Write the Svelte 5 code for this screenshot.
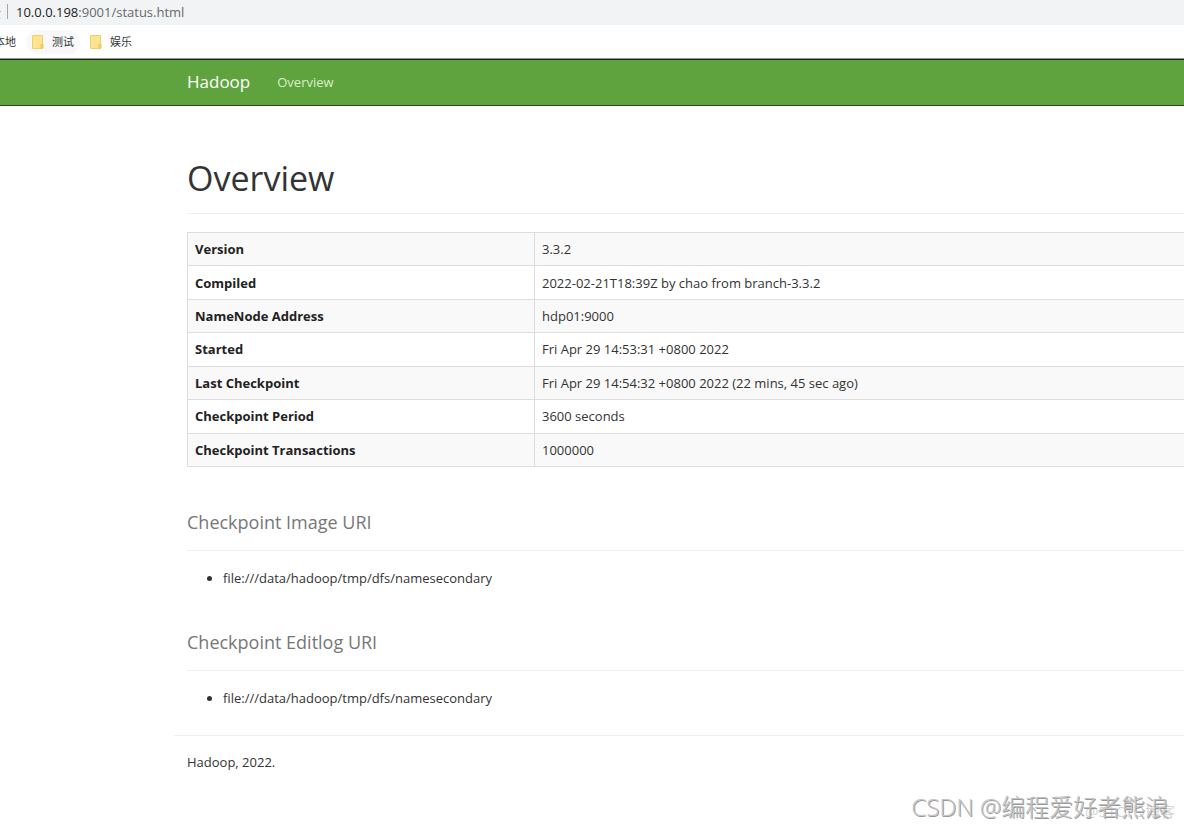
<script lang="ts">
  interface InfoRow {
    label: string;
    value: string;
  }

  const bookmarks = ["本地", "测试", "娱乐"];

  const rows: InfoRow[] = [
    { label: "Version", value: "3.3.2" },
    { label: "Compiled", value: "2022-02-21T18:39Z by chao from branch-3.3.2" },
    { label: "NameNode Address", value: "hdp01:9000" },
    { label: "Started", value: "Fri Apr 29 14:53:31 +0800 2022" },
    { label: "Last Checkpoint", value: "Fri Apr 29 14:54:32 +0800 2022 (22 mins, 45 sec ago)" },
    { label: "Checkpoint Period", value: "3600 seconds" },
    { label: "Checkpoint Transactions", value: "1000000" },
  ];

  const sections = [
    { title: "Checkpoint Image URI", uris: ["file:///data/hadoop/tmp/dfs/namesecondary"] },
    { title: "Checkpoint Editlog URI", uris: ["file:///data/hadoop/tmp/dfs/namesecondary"] },
  ];
</script>

<div class="address-bar">
  <span class="clipped">全</span>
  <span class="divider"></span>
  <span class="url"><span class="host">10.0.0.198</span>:9001/status.html</span>
</div>

<div class="bookmarks">
  {#each bookmarks as name, i}
    <a class="bookmark" class:first={i === 0} class:hovered={i === 1} href="#{name}">
      {#if i > 0}
        <svg width="12" height="14" viewBox="0 0 12 14" aria-hidden="true">
          <path d="M1 .5H10.5V13.5H1Q.5 13.5 .5 13V1Q.5 .5 1 .5Z" fill="#ffe391" stroke="#efcf68" />
          <path d="M9 9.5H11V13H9Z" fill="#ffdc6d" stroke="#eac34d" />
        </svg>
      {/if}
      <span>{name}</span>
    </a>
  {/each}
</div>

<header class="navbar">
  <a class="brand" href="#home">Hadoop</a>
  <a class="nav-link" href="#overview">Overview</a>
</header>

<main class="container">
  <h1>Overview</h1>

  <table>
    <tbody>
      {#each rows as row}
        <tr>
          <th scope="row">{row.label}</th>
          <td>{row.value}</td>
        </tr>
      {/each}
    </tbody>
  </table>

  {#each sections as section}
    <section>
      <h2>{section.title}</h2>
      <ul>
        {#each section.uris as uri}
          <li>{uri}</li>
        {/each}
      </ul>
    </section>
  {/each}
</main>

<footer>
  <p>Hadoop, 2022.</p>
</footer>

<div class="watermark host-mark">@51CTO博客</div>
<div class="watermark author-mark">CSDN @编程爱好者熊浪</div>

<style>
  :global(body) {
    background: #fff;
    color: #333;
    font-family: "Open Sans", "Noto Sans CJK SC", sans-serif;
    font-size: 13px;
    line-height: 18px;
    overflow: hidden;
  }

  .address-bar {
    display: flex;
    align-items: center;
    height: 23px;
    padding-bottom: 2px;
    background: #f1f3f4;
    color: #666a6e;
  }

  .clipped {
    display: flex;
    justify-content: flex-end;
    width: 1px;
    overflow: hidden;
  }

  .divider {
    width: 1px;
    height: 15px;
    margin: 0 8px 0 6px;
    background: #a5a8ab;
  }

  .host {
    color: #202124;
  }

  .bookmarks {
    display: flex;
    align-items: center;
    height: 33px;
    border-bottom: 1px solid #999;
    font-size: 11px;
  }

  .bookmark {
    display: flex;
    align-items: center;
    gap: 8px;
    padding: 3px 6px;
    border-radius: 12px;
    color: #333;
    text-decoration: none;
  }

  .bookmark.first {
    margin: 0 4px 0 -12px;
  }

  .bookmark.hovered {
    background: #f8f8f9;
    margin-right: 4px;
  }

  .navbar {
    display: flex;
    align-items: center;
    gap: 27px;
    height: 43px;
    padding: 0 0 2px 187px;
    background: #5fa33e;
    border-top: 1px solid #17240f;
    border-bottom: 1px solid #33422b;
  }

  .brand {
    color: #fff;
    font-size: 17px;
    text-decoration: none;
  }

  .nav-link {
    color: #d8f0cb;
    text-decoration: none;
  }

  .container {
    padding-left: 187px;
  }

  h1 {
    margin: 52px 0 18px;
    padding-bottom: 15px;
    border-bottom: 1px solid #eee;
    font-size: 34px;
    font-weight: 400;
    line-height: 40px;
  }

  table {
    width: 100%;
    height: 235px;
    border-collapse: collapse;
    border: 1px solid #ddd;
    border-right: 0;
  }

  tr:nth-child(odd) {
    background: #f9f9f9;
  }

  th,
  td {
    padding: 0 7px;
    border: 1px solid #ddd;
    text-align: left;
  }

  td {
    border-right: 0;
  }

  th {
    width: 332px;
    color: #222;
    font-weight: 700;
  }

  h2 {
    margin: 0 0 18px;
    padding: 42px 0 15px;
    border-bottom: 1px solid #eee;
    color: #777;
    font-size: 18px;
    font-weight: 400;
    line-height: 26px;
  }

  ul {
    margin: 0;
    padding-left: 36px;
  }

  footer {
    margin: 28px 0 0 174px;
    padding: 17px 13px;
    border-top: 1px solid #eee;
  }

  footer p {
    margin: 0;
  }

  .watermark {
    position: absolute;
    white-space: nowrap;
  }

  .host-mark {
    right: 9px;
    bottom: 8px;
    color: #d4d4d4;
    font-size: 15px;
  }

  .author-mark {
    right: 15px;
    bottom: 5px;
    color: #c4c4c4;
    font-size: 24px;
    font-weight: 300;
    line-height: 32px;
    text-shadow: 1px 1px 0 #999;
  }
</style>
